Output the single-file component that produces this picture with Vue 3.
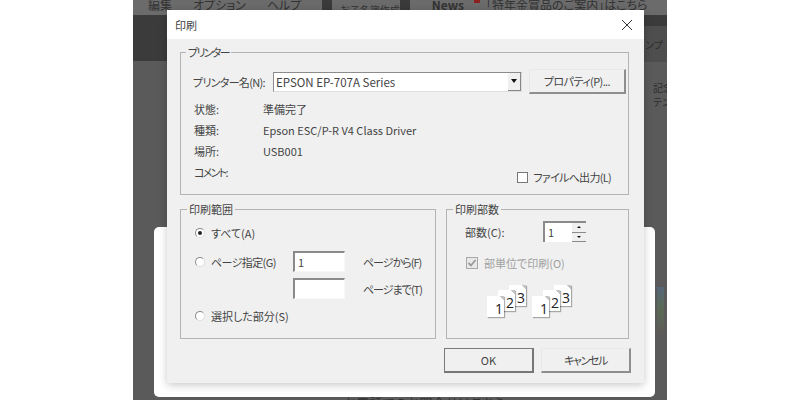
<script setup>
const infoRows = [
  { label: "状態:", value: "準備完了" },
  { label: "種類:", value: "Epson ESC/P-R V4 Class Driver" },
  { label: "場所:", value: "USB001" },
];
const menus = ["編集", "オプション", "ヘルプ"];
const stacks = [0, 1];
</script>

<template>
  <div class="stage">
    <div class="app">
      <div class="topbar">
        <span v-for="m in menus" :key="m" class="menu">{{ m }}</span>
        <span class="square"></span>
        <span class="menu doc">お子名簿作成</span>
        <span class="square"></span>
        <span class="menu news">News</span>
        <span class="arrow"></span>
        <span class="menu">「特年金賞品のご案内」はこちら</span>
      </div>
      <div class="darkband"></div>
      <div class="sidetext">
        <span class="first">ンプ</span>
        <span class="gap">記念</span>
        <span>テン</span>
      </div>
      <div class="card"></div>
      <div class="chartBit"></div>
      <div class="footerText">お電話でのお問合せはこちら</div>
    </div>

    <div class="dialog">
      <div class="titlebar">
        <span>印刷</span>
        <svg class="close" width="10" height="10" viewBox="0 0 10 10">
          <path d="M0 0L10 10M10 0L0 10" stroke="#333" stroke-width="1" fill="none" />
        </svg>
      </div>
      <div class="body">
        <fieldset class="group printer">
          <legend class="tight">プリンター</legend>
          <div class="inner">
            <div class="nameRow">
              <label class="nameLabel">プリンター名(N):</label>
              <div class="select">
                <span>EPSON EP-707A Series</span>
                <span class="selectBtn"><i class="tri"></i></span>
              </div>
              <button class="btn prop">プロパティ(P)...</button>
            </div>
            <div class="info">
              <div v-for="r in infoRows" :key="r.label" class="infoRow">
                <span class="infoLabel">{{ r.label }}</span>
                <span>{{ r.value }}</span>
              </div>
              <div class="infoRow">
                <span class="infoLabel tight">コメント:</span>
                <label class="fileCheck"><i class="check"></i>ファイルへ出力(L)</label>
              </div>
            </div>
          </div>
        </fieldset>

        <div class="midRow">
          <fieldset class="group range">
            <legend>印刷範囲</legend>
            <div class="inner">
              <div class="radioRow">
                <i class="radio on"></i><span>すべて(A)</span>
              </div>
              <div class="pageGrid">
                <div class="radioRow"><i class="radio"></i><span class="semi">ページ指定(G)</span></div>
                <div class="textbox">1</div>
                <span class="pageLabel">ページから(F)</span>
                <div></div>
                <div class="textbox"></div>
                <span class="pageLabel">ページまで(T)</span>
              </div>
              <div class="radioRow last">
                <i class="radio"></i><span>選択した部分(S)</span>
              </div>
            </div>
          </fieldset>

          <fieldset class="group copies">
            <legend>印刷部数</legend>
            <div class="inner">
              <div class="copyRow">
                <span>部数(C):</span>
                <div class="spin">
                  <span class="spinVal">1</span>
                  <span class="spinBtns">
                    <i><b class="up"></b></i>
                    <i><b class="down"></b></i>
                  </span>
                </div>
              </div>
              <div class="collate">
                <i class="check disabled">
                  <svg width="10" height="10" viewBox="0 0 10 10">
                    <path d="M1.5 5L4 7.5L8.5 2" stroke="#9a9a9a" stroke-width="1.8" fill="none" />
                  </svg>
                </i>
                <span>部単位で印刷(O)</span>
              </div>
              <div class="stacks">
                <div v-for="s in stacks" :key="s" class="stack">
                  <span class="sheet s3">3</span>
                  <span class="sheet s2">2</span>
                  <span class="sheet s1">1</span>
                </div>
              </div>
            </div>
          </fieldset>
        </div>

        <div class="actions">
          <button class="btn ok">OK</button>
          <button class="btn cancel">キャンセル</button>
        </div>
      </div>
    </div>
  </div>
</template>

<style>
html, body { margin: 0; background: #fff; }
</style>

<style scoped>
.stage {
  position: relative;
  width: 800px;
  height: 400px;
  overflow: hidden;
  background: #fff;
  font-family: "Noto Sans CJK JP", "Open Sans", sans-serif;
  font-feature-settings: "palt";
  font-size: 11px;
  color: #444;
}

.tight { letter-spacing: -1.7px; }
.semi { letter-spacing: -0.6px; }

.app {
  position: relative;
  width: 534px;
  height: 400px;
  margin-left: 133px;
  background: #5a5a5a;
  overflow: hidden;
}

.topbar {
  display: flex;
  align-items: flex-start;
  height: 15px;
  padding-left: 15px;
  background: #6b6b6b;
  color: #333;
  font-size: 12px;
  line-height: 9px;
  overflow: hidden;
  white-space: nowrap;
}
.menu { margin-right: 21px; }
.doc { margin: 5px 0 0 8px; font-size: 10px; }

.square { width: 10px; height: 13px; background: #3a3a3a; flex: none; }
.doc + .square { margin-right: 22px; }
.news { font-weight: bold; margin-right: 10px; }
.arrow { width: 6px; height: 3px; margin-right: 6px; background: #8a2020; flex: none; }

.darkband {
  position: relative;
  height: 46px;
  background: #3b3b3b;
}
.darkband::after {
  content: "";
  position: absolute;
  right: 0;
  top: 11px;
  width: 40px;
  height: 36px;
  background: #4e4e4e;
}

.sidetext {
  position: absolute;
  right: 0;
  top: 38px;
  width: 24px;
  display: flex;
  flex-direction: column;
  font-size: 10px;
  line-height: 14px;
  color: #2c2c2c;
  white-space: nowrap;
}
.sidetext .first { margin-left: 2px; }
.sidetext .gap { margin-top: 29px; }
.sidetext span + span { margin-left: 10px; }

.card {
  position: absolute;
  left: 21px;
  top: 227px;
  width: 501px;
  height: 170px;
  background: #fff;
  border-radius: 5px;
}

.chartBit {
  position: absolute;
  left: 524px;
  top: 287px;
  width: 7px;
  height: 48px;
  background: linear-gradient(#56677a, #5a6a55 45%, #5d5a58);
}

.footerText {
  position: absolute;
  left: 211px;
  top: 393px;
  font-size: 13px;
  color: #333;
}

.dialog {
  position: absolute;
  left: 167px;
  top: 10px;
  width: 477px;
  height: 373px;
  background: #f0f0f0;
  box-shadow: 0 2px 8px rgba(0, 0, 0, 0.22);
}

.titlebar {
  display: flex;
  align-items: center;
  justify-content: space-between;
  height: 29px;
  padding: 0 12px 0 8px;
  background: #fff;
}

.body { padding: 6px 15px 0 13px; }

.group {
  margin: 0;
  padding: 0;
  border: 1px solid #b4b4b4;
  min-width: 0;
  box-sizing: border-box;
}
.group legend {
  margin-left: 6px;
  padding: 0 2px;
  line-height: 14px;
}
.printer legend { margin-left: 5px; }

.printer { width: 449px; height: 150px; }
.printer .inner { padding: 10px 2px 0 12px; }

.nameRow { display: flex; align-items: center; }
.nameLabel { width: 80px; white-space: nowrap; letter-spacing: -0.7px; }

.select {
  display: flex;
  justify-content: space-between;
  align-items: center;
  box-sizing: border-box;
  width: 249px;
  height: 20px;
  padding-left: 2px;
  background: #fff;
  border: 1px solid #8c8c8c;
  border-right-color: #ddd;
  border-bottom-color: #ddd;
  font-size: 11.5px;
}
.selectBtn {
  display: flex;
  align-items: center;
  justify-content: center;
  width: 13px;
  height: 18px;
  background: #f0f0f0;
  border-right: 1px solid #888;
  border-bottom: 1px solid #888;
  box-sizing: border-box;
}
.tri {
  width: 0;
  height: 0;
  border-left: 3.5px solid transparent;
  border-right: 3.5px solid transparent;
  border-top: 4px solid #111;
}

.btn {
  box-sizing: border-box;
  background: #f0f0f0;
  border: 1px solid #e8e8e8;
  border-right: 2px solid #8e8e8e;
  border-bottom: 2px solid #8e8e8e;
  font-family: inherit;
  font-feature-settings: "palt";
  font-size: 11px;
  color: #444;
  padding: 0;
}
.prop { width: 97px; height: 25px; margin-left: 7px; letter-spacing: -0.6px; }

.info { margin-top: 4px; margin-left: 1px; }
.infoRow { display: flex; height: 21px; align-items: center; }
.infoLabel { width: 69px; }

.fileCheck {
  display: flex;
  align-items: center;
  gap: 5px;
  margin: 11px 15px 0 auto;
  letter-spacing: -0.7px;
}

.check {
  display: inline-flex;
  box-sizing: border-box;
  width: 11px;
  height: 11px;
  background: #fff;
  border: 1px solid #777;
}
.check.disabled {
  width: 12px;
  height: 12px;
  background: #e8e8e8;
  border-color: #a8a8a8;
}

.midRow { display: flex; justify-content: space-between; margin-top: 7px; }

.range { width: 256px; height: 137px; }
.range .inner { padding: 9px 0 0 14px; }
.copies { width: 183px; height: 137px; }
.copies .inner { padding: 5px 0 0 18px; }

.radioRow { display: flex; align-items: center; gap: 6px; }
.radioRow.last { margin-top: 9px; }

.radio {
  position: relative;
  display: inline-block;
  box-sizing: border-box;
  width: 10px;
  height: 10px;
  border-radius: 50%;
  background: #fff;
  border: 1px solid #8a8a8a;
  border-right-color: #ddd;
  border-bottom-color: #ddd;
}
.radio.on::after {
  content: "";
  position: absolute;
  left: 2px;
  top: 2px;
  width: 4px;
  height: 4px;
  border-radius: 50%;
  background: #222;
}

.pageGrid {
  display: grid;
  grid-template-columns: 98px 52px auto;
  row-gap: 6px;
  align-items: center;
  margin-top: 10px;
}
.pageLabel { margin-left: 18px; letter-spacing: -1px; }

.textbox {
  box-sizing: border-box;
  width: 52px;
  height: 21px;
  padding-left: 3px;
  line-height: 18px;
  background: #fff;
  border: 1px solid #f8f8f8;
  border-top: 2px solid #8a8a8a;
  border-left: 2px solid #8a8a8a;
}

.copyRow { display: flex; align-items: center; }
.copyRow > span { width: 78px; }

.spin {
  display: flex;
  box-sizing: border-box;
  width: 43px;
  height: 21px;
  background: #fff;
  border-top: 2px solid #8a8a8a;
  border-left: 2px solid #8a8a8a;
}
.spinVal { flex: 1; padding-left: 3px; line-height: 18px; }
.spinBtns { display: flex; flex-direction: column; width: 14px; }
.spinBtns i {
  flex: 1;
  display: flex;
  align-items: center;
  justify-content: center;
  background: #f0f0f0;
  border-bottom: 1px solid #8a8a8a;
}
.spinBtns b { width: 0; height: 0; border-left: 2px solid transparent; border-right: 2px solid transparent; }
.spinBtns .up { border-bottom: 2px solid #111; }
.spinBtns .down { border-top: 2px solid #111; }

.collate {
  display: flex;
  align-items: center;
  gap: 6px;
  margin: 13px 0 0 1px;
  color: #a0a0a0;
}

.stacks { display: flex; gap: 5px; margin-top: 14px; margin-left: 22px; }
.stack { position: relative; width: 40px; height: 32px; }
.sheet {
  position: absolute;
  box-sizing: border-box;
  width: 17px;
  height: 21px;
  padding-right: 1px;
  background: linear-gradient(225deg, #c4c4c4 0 3px, #fff 3px);
  box-shadow: 1px 1px 1px rgba(0, 0, 0, 0.3);
  text-align: right;
  font-family: "Open Sans", sans-serif;
  font-size: 14px;
  line-height: 26px;
  color: #222;
}
.s1 { left: 0; top: 11px; }
.s2 { left: 11px; top: 5px; }
.s3 { left: 22px; top: 0; }

.actions { display: flex; gap: 7px; margin: 9px -2px 0 0; justify-content: flex-end; }
.ok { width: 90px; height: 25px; border: 1px solid #7a7a7a; border-right: 2px solid #777; border-bottom: 2px solid #777; }
.cancel { width: 90px; height: 25px; letter-spacing: -1.4px; }

.close { display: block; }
</style>
